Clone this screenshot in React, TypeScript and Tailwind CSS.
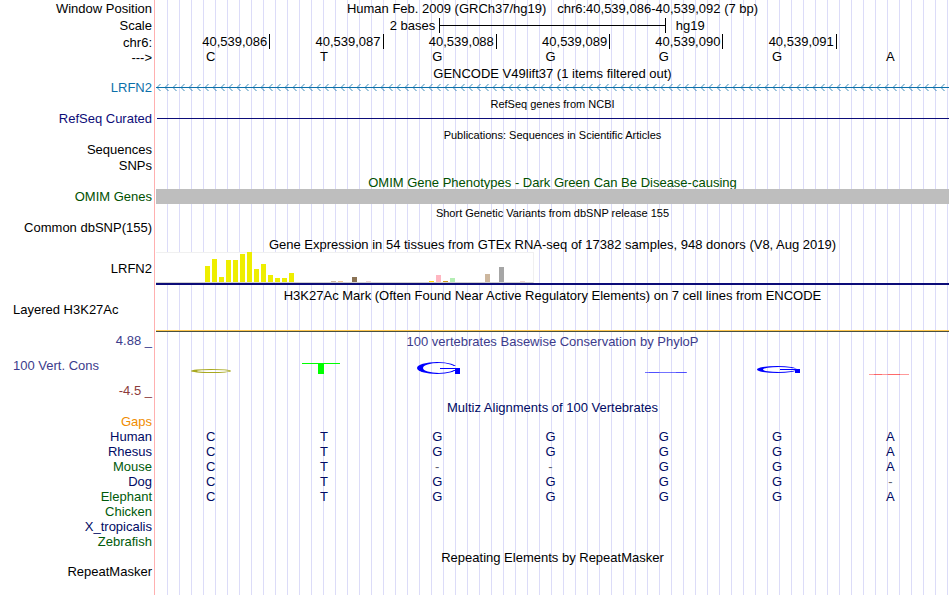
import type { ReactNode } from "react";
import clsx from "clsx";

const positions = ["40,539,086", "40,539,087", "40,539,088", "40,539,089", "40,539,090", "40,539,091"];

const species = [
  { name: "Human", color: "text-[#000a64]", bases: "CTGGGGA" },
  { name: "Rhesus", color: "text-[#000a64]", bases: "CTGGGGA" },
  { name: "Mouse", color: "text-[#005a0a]", bases: "CT--GGA" },
  { name: "Dog", color: "text-[#000a64]", bases: "CTGGGG-" },
  { name: "Elephant", color: "text-[#005a0a]", bases: "CTGGGGA" },
  { name: "Chicken", color: "text-[#005a0a]", bases: "" },
  { name: "X_tropicalis", color: "text-[#000a64]", bases: "" },
  { name: "Zebrafish", color: "text-[#005a0a]", bases: "" },
];

// tissue index -> bar height and color
const expression: Record<number, { h: number; color: string }> = {
  7: { h: 16, color: "bg-[#eeee00]" },
  8: { h: 23, color: "bg-[#eeee00]" },
  9: { h: 5, color: "bg-[#eeee00]" },
  10: { h: 22, color: "bg-[#eeee00]" },
  11: { h: 22, color: "bg-[#eeee00]" },
  12: { h: 28, color: "bg-[#eeee00]" },
  13: { h: 30, color: "bg-[#eeee00]" },
  14: { h: 13, color: "bg-[#eeee00]" },
  15: { h: 18, color: "bg-[#eeee00]" },
  16: { h: 7, color: "bg-[#eeee00]" },
  17: { h: 4, color: "bg-[#eeee00]" },
  18: { h: 4, color: "bg-[#eeee00]" },
  19: { h: 9, color: "bg-[#eeee00]" },
  25: { h: 1, color: "bg-[#cdb79e]" },
  26: { h: 1, color: "bg-[#eec591]" },
  28: { h: 5, color: "bg-[#8b7355]" },
  30: { h: 1, color: "bg-[#eed5d2]" },
  39: { h: 1, color: "bg-[#ffd700]" },
  40: { h: 7, color: "bg-[#ffb6c1]" },
  41: { h: 1, color: "bg-[#cd9b1d]" },
  42: { h: 4, color: "bg-[#b4eeb4]" },
  47: { h: 8, color: "bg-[#cdb79e]" },
  49: { h: 15, color: "bg-[#a6a6a6]" },
  52: { h: 1, color: "bg-[#eed5d2]" },
};

type RowProps = {
  label?: string;
  height: string;
  color?: string;
  align?: string;
  left?: boolean;
  children?: ReactNode;
};

const Row = ({ label, height, color, align = "items-center", left, children }: RowProps) => (
  <div className={clsx("flex", height)}>
    <div
      className={clsx(
        "flex w-[155px] shrink-0 border-r border-[#ffb0b0] pr-0.5 pl-[13px] whitespace-nowrap",
        left ? "justify-start" : "justify-end",
        align,
        color
      )}
    >
      {label}
    </div>
    <div className="ml-px min-w-0 flex-1 bg-[repeating-linear-gradient(to_right,transparent_0_11px,#dcdcf8_11px_12px)]">
      {children}
    </div>
  </div>
);

type TitleProps = { children: ReactNode; small?: boolean; tight?: boolean; color?: string };

const Title = ({ children, small, tight, color }: TitleProps) => (
  <div
    className={clsx(
      "flex h-full items-end justify-center whitespace-pre",
      small ? "text-[11px]" : "text-[13px]",
      tight ? "leading-[13px]" : "leading-[15px]",
      color
    )}
  >
    {children}
  </div>
);

const Bases = ({ bases, className }: { bases: string; className?: string }) => (
  <div className={clsx("grid grid-cols-7 text-center", className)}>
    {bases.split("").map((b, i) => (
      <span key={i} className={clsx("pr-1", b === "-" && "text-[#606070]")}>
        {b}
      </span>
    ))}
  </div>
);

const GeneArrows = () => (
  <svg className="block h-[13px] w-full" aria-hidden="true">
    <defs>
      <pattern id="arrows" width="8" height="13" patternUnits="userSpaceOnUse">
        <path d="M4.5 3 L1 6.5 L4.5 10" fill="none" stroke="#0c70aa" strokeOpacity="0.8" />
      </pattern>
    </defs>
    <rect width="100%" height="13" fill="url(#arrows)" />
    <rect width="100%" y="6" height="1" fill="#0c70aa" />
  </svg>
);

const Expression = () => (
  <div className="border-b-2 border-[#0c0c78]">
    <div className="flex h-[31px] w-[378px] items-end gap-0.5 border-t border-r border-b border-t-[#f0f0f0] border-r-[#f0f0f0] border-b-[#d0d0d0] bg-white">
      {Array.from({ length: 54 }, (_, i) => (
        <div
          key={i}
          className={clsx("w-[5px] shrink-0", expression[i]?.color)}
          style={{ height: expression[i]?.h ?? 0 }}
        />
      ))}
    </div>
  </div>
);

// flattened ring, thick on the left side and thin above and below
const Ring = ({ id, cy, ry, color, gap }: { id: string; cy: number; ry: number; color: string; gap: number }) => (
  <>
    <mask id={id} maskUnits="userSpaceOnUse" x="0" y="0" width="48" height="35">
      <rect width="48" height="35" fill="white" />
      <ellipse cx="26" cy={cy} rx="16" ry={ry - 1} fill="black" />
      <rect x="40" y={cy - gap} width="8" height={gap * 2} fill="black" />
    </mask>
    <ellipse cx="24" cy={cy} rx="20" ry={ry} fill={color} mask={`url(#${id})`} />
  </>
);

const logos = [
  <>
    <Ring id="ring-0" cy={23} ry={2} color="#a8a820" gap={0} />
  </>,
  <>
    <rect x="2" y="15" width="38" height="1" fill="#00ff00" />
    <rect x="18" y="15" width="6" height="11" fill="#00ff00" />
  </>,
  <>
    <Ring id="ring-2" cy={20} ry={6} color="#0000ff" gap={2} />
    <rect x="27" y="20" width="20" height="1" fill="#0000ff" />
    <rect x="42" y="21" width="5" height="5" fill="#0000ff" />
  </>,
  null,
  <>
    <rect x="5" y="24" width="42" height="1" fill="#0000ff" fillOpacity="0.55" />
    <rect x="9" y="24" width="10" height="1" fill="#0000ff" fillOpacity="0.3" />
    <rect x="36" y="24" width="10" height="1" fill="#0000ff" fillOpacity="0.3" />
  </>,
  <>
    <Ring id="ring-5" cy={21.5} ry={3.5} color="#0000ff" gap={1} />
    <rect x="27" y="21" width="20" height="1" fill="#0000ff" />
    <rect x="42" y="21" width="5" height="4" fill="#0000ff" />
  </>,
  <>
    <rect x="3" y="26" width="40" height="1" fill="#ff0000" fillOpacity="0.4" />
    <rect x="8" y="26" width="8" height="1" fill="#ff0000" fillOpacity="0.3" />
    <rect x="22" y="26" width="12" height="1" fill="#ff0000" fillOpacity="0.3" />
  </>,
];

const Conservation = () => (
  <div className="grid grid-cols-7 justify-items-center">
    {logos.map((logo, i) => (
      <div key={i} className="pr-1">
        <svg width="48" height="35" viewBox="0 0 48 35" className="block" aria-hidden="true">
          {logo}
        </svg>
      </div>
    ))}
  </div>
);

export default function App() {
  return (
    <main className="flex min-h-screen flex-col bg-white pr-px font-['Liberation_Sans',Arial,sans-serif] text-[13px] leading-[15px] text-black">
      <Row label="Window Position" height="h-4">
        <Title>{"Human Feb. 2009 (GRCh37/hg19)   chr6:40,539,086-40,539,092 (7 bp)"}</Title>
      </Row>
      <Row label="Scale" height="h-[18px]">
        <div className="grid h-full grid-cols-[5fr_4fr_5fr] items-center">
          <span className="pr-1 text-right">2 bases</span>
          <div className="flex h-[15px] items-center border-x border-black">
            <div className="h-px w-full bg-black" />
          </div>
          <span className="pl-2.5">hg19</span>
        </div>
      </Row>
      <Row label="chr6:" height="h-4" align="items-end">
        <div className="grid h-full grid-cols-7">
          {positions.map((p) => (
            <div key={p} className="-mr-px flex h-[15px] items-end justify-end border-r border-black pr-0.5">
              {p}
            </div>
          ))}
        </div>
      </Row>
      <Row label="--->" height="h-[15px]">
        <Bases bases="CTGGGGA" className="leading-[13px]" />
      </Row>

      <Row height="h-4">
        <Title>GENCODE V49lift37 (1 items filtered out)</Title>
      </Row>
      <Row label="LRFN2" height="h-[13px]" color="text-[#0c70aa]">
        <GeneArrows />
      </Row>
      <Row height="h-[18px]">
        <Title small>RefSeq genes from NCBI</Title>
      </Row>
      <Row label="RefSeq Curated" height="h-[13px]" color="text-[#0c0c78]">
        <div className="flex h-full items-center pl-px">
          <div className="h-px w-full bg-[#0c0c78]" />
        </div>
      </Row>

      <Row height="h-[17px]">
        <Title small tight>Publications: Sequences in Scientific Articles</Title>
      </Row>
      <Row label="Sequences" height="h-4" align="items-start" />
      <Row label="SNPs" height="h-4" align="items-start" />

      <Row height="h-[15px]">
        <Title tight color="text-[#005000]">OMIM Gene Phenotypes - Dark Green Can Be Disease-causing</Title>
      </Row>
      <Row label="OMIM Genes" height="h-[15px]" color="text-[#005000]">
        <div className="h-full bg-[#bebebe]" />
      </Row>

      <Row height="h-4">
        <Title small tight>Short Genetic Variants from dbSNP release 155</Title>
      </Row>
      <Row label="Common dbSNP(155)" height="h-4" align="items-start" />

      <Row height="h-4">
        <Title>Gene Expression in 54 tissues from GTEx RNA-seq of 17382 samples, 948 donors (V8, Aug 2019)</Title>
      </Row>
      <Row label="LRFN2" height="h-[33px]">
        <Expression />
      </Row>

      <Row height="h-[17px]">
        <Title tight>H3K27Ac Mark (Often Found Near Active Regulatory Elements) on 7 cell lines from ENCODE</Title>
      </Row>
      <Row label="Layered H3K27Ac" height="h-[30px]" align="items-start" left>
        <div className="flex h-full flex-col justify-end">
          <div className="h-px bg-[#ffc850]" />
          <div className="h-px bg-[#4a5040]" />
        </div>
      </Row>

      <Row label="4.88 _" height="h-4" color="text-[#3c3c8c]">
        <Title tight color="text-[#3c3c8c]">100 vertebrates Basewise Conservation by PhyloP</Title>
      </Row>
      <Row label="100 Vert. Cons" height="h-[35px]" color="text-[#3c3c8c]" left>
        <Conservation />
      </Row>
      <Row label="-4.5 _" height="h-[15px]" color="text-[#8c3c3c]" />

      <Row height="h-[17px]">
        <Title color="text-[#000a64]">Multiz Alignments of 100 Vertebrates</Title>
      </Row>
      <Row label="Gaps" height="h-[14px]" align="items-end" color="text-[#f08c00]" />
      {species.map((s) => (
        <Row key={s.name} label={s.name} height="h-[15px]" color={s.color}>
          <Bases bases={s.bases} className="text-[#000a64]" />
        </Row>
      ))}

      <Row height="h-[15px]">
        <Title tight>Repeating Elements by RepeatMasker</Title>
      </Row>
      <Row label="RepeatMasker" height="h-4" align="items-start" />
      <Row height="grow" />
    </main>
  );
}
